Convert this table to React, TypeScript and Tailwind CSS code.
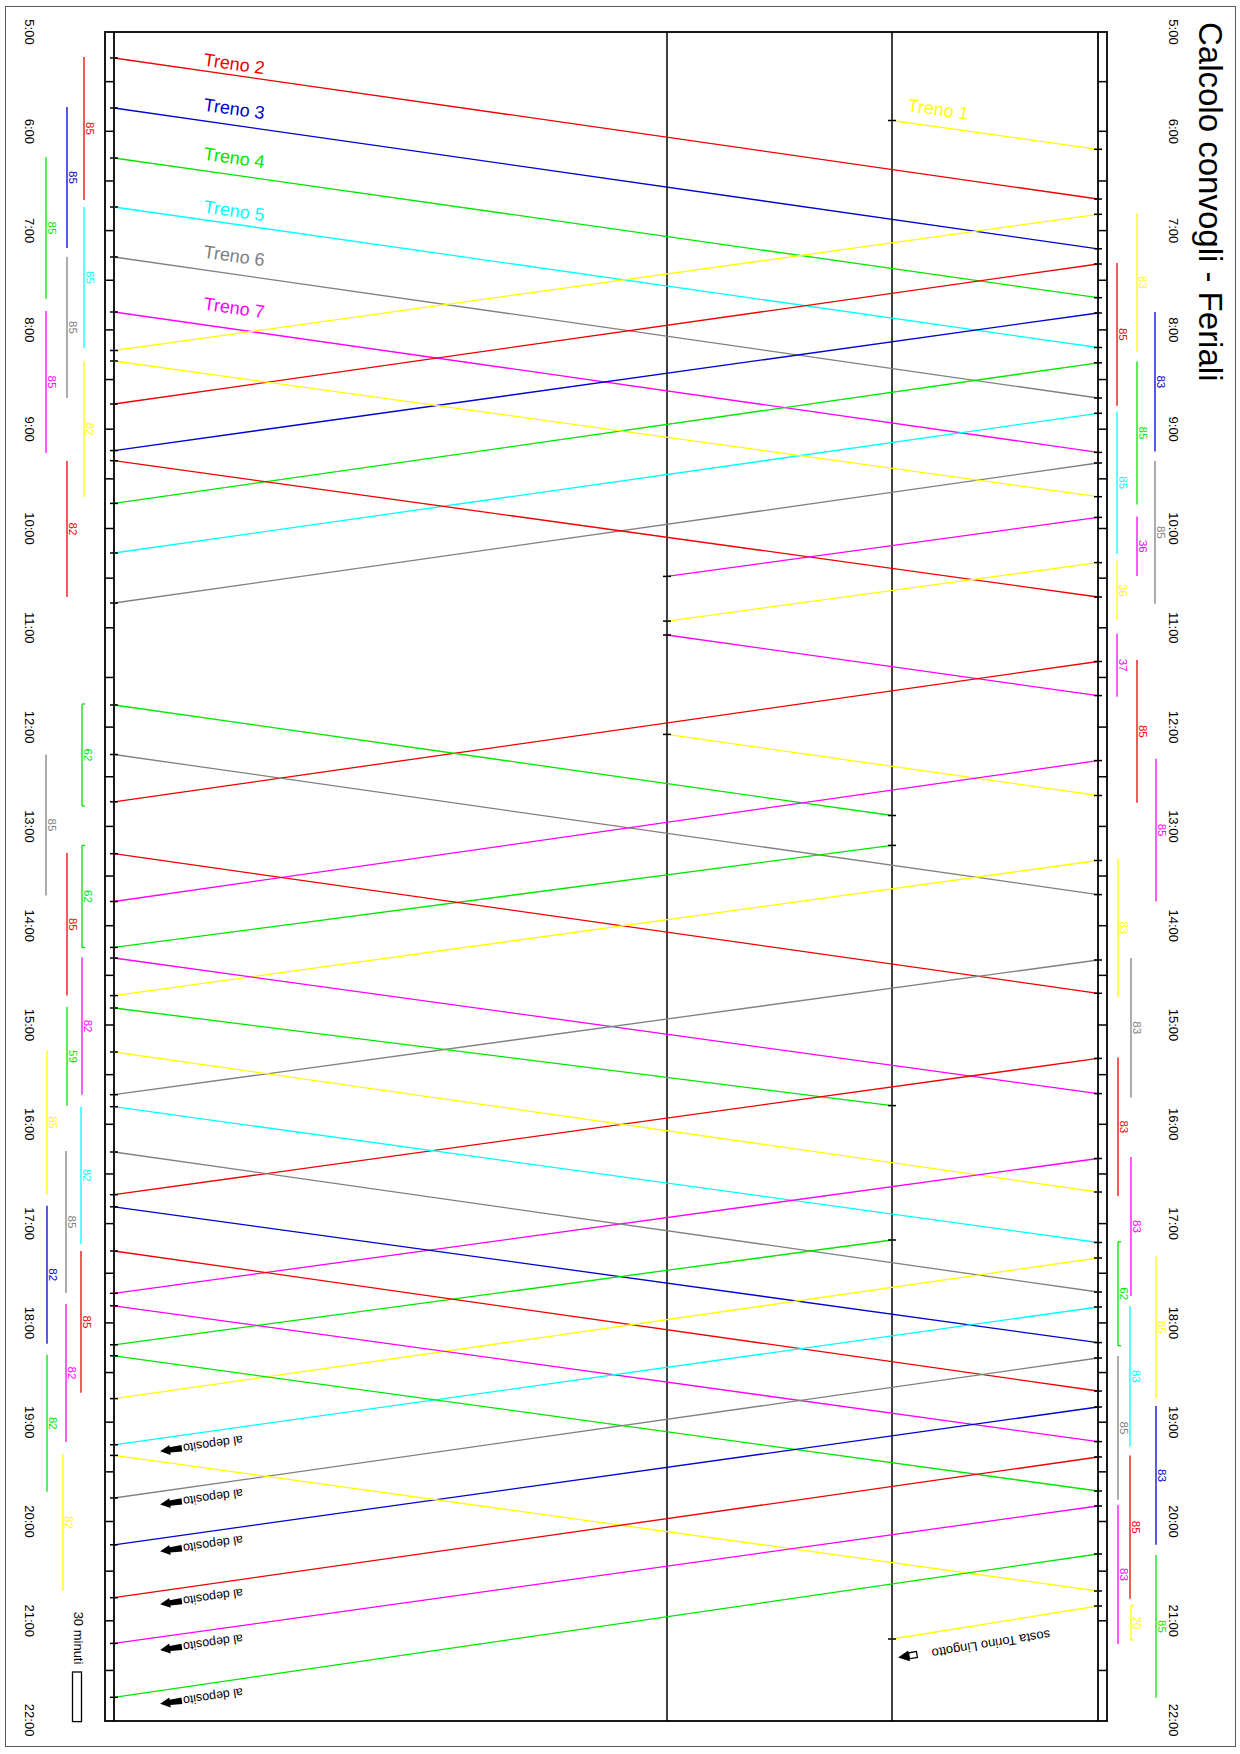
import React from 'react';

/**
 * Orario grafico - calcolo convogli (feriali)
 * Coordinate in px della pagina: y = tempo (5:00 -> 32, 22:00 -> 1720), x = stazione
 */

type Station = 'L' | 'R' | 'M1' | 'M2';
const X: Record<Station, number> = { L: 114, R: 1098, M1: 667, M2: 892 };

const C = {
  red: '#f00000',
  blue: '#0000d0',
  green: '#00e600',
  cyan: '#00ffff',
  gray: '#808080',
  magenta: '#ff00ff',
  yellow: '#ffff00',
};
type Col = keyof typeof C;

const TOP = 32;
const BOTTOM = 1721;
const HOUR = 99.3;

// [colore, partenza, y, arrivo, y]
const corse: [Col, Station, number, Station, number][] = [
  ['red', 'L', 58, 'R', 199],
  ['blue', 'L', 108, 'R', 248.8],
  ['green', 'L', 158, 'R', 297.7],
  ['cyan', 'L', 207, 'R', 347.5],
  ['gray', 'L', 257, 'R', 398],
  ['magenta', 'L', 312, 'R', 452.4],
  ['yellow', 'M2', 120.5, 'R', 149.3],
  ['yellow', 'R', 214.3, 'L', 350.5],
  ['red', 'R', 264, 'L', 404],
  ['blue', 'R', 313, 'L', 450.6],
  ['green', 'R', 362.8, 'L', 503.4],
  ['cyan', 'R', 413.3, 'L', 553],
  ['gray', 'R', 463, 'L', 603],
  ['yellow', 'L', 361, 'R', 496.7],
  ['red', 'L', 460.7, 'R', 597],
  ['magenta', 'R', 517.4, 'M1', 576.4],
  ['yellow', 'R', 562.6, 'M1', 621.1],
  ['magenta', 'M1', 635, 'R', 695.6],
  ['red', 'R', 661.5, 'L', 801.8],
  ['yellow', 'M1', 734.4, 'R', 795.5],
  ['green', 'L', 705, 'M2', 815.5],
  ['gray', 'L', 754.5, 'R', 894.6],
  ['magenta', 'R', 760.6, 'L', 901.5],
  ['green', 'M2', 845.4, 'L', 947.4],
  ['red', 'L', 853.7, 'R', 993.3],
  ['yellow', 'R', 860.5, 'L', 995.6],
  ['magenta', 'L', 958, 'R', 1093.6],
  ['gray', 'R', 960, 'L', 1094.7],
  ['green', 'L', 1008, 'M2', 1105.6],
  ['red', 'R', 1058.4, 'L', 1194.7],
  ['yellow', 'L', 1052, 'R', 1192],
  ['cyan', 'L', 1106.7, 'R', 1242.5],
  ['magenta', 'R', 1158.5, 'L', 1293.3],
  ['gray', 'L', 1152, 'R', 1292],
  ['blue', 'L', 1206.8, 'R', 1342.6],
  ['green', 'M2', 1240, 'L', 1344.8],
  ['red', 'L', 1251, 'R', 1391],
  ['yellow', 'R', 1258, 'L', 1398.6],
  ['magenta', 'L', 1305.8, 'R', 1441.6],
  ['cyan', 'R', 1307, 'L', 1444.8],
  ['green', 'L', 1355.8, 'R', 1491],
  ['gray', 'R', 1358, 'L', 1498],
  ['blue', 'R', 1407, 'L', 1544.8],
  ['yellow', 'L', 1455.4, 'R', 1591],
  ['red', 'R', 1457, 'L', 1597.7],
  ['magenta', 'R', 1506, 'L', 1643.4],
  ['green', 'R', 1554, 'L', 1697.3],
  ['yellow', 'R', 1606, 'M2', 1639],
];

// durata corsa: [colore, x, y inizio, y fine, minuti, staffe]
type Bar = [Col, number, number, number, string, boolean?];

const barreSx: Bar[] = [
  ['red', 84, 57, 200, '85'],
  ['blue', 67, 107, 248, '85'],
  ['green', 46, 157, 299, '85'],
  ['cyan', 84, 207, 348, '85'],
  ['gray', 67, 257, 398, '85'],
  ['magenta', 46, 311, 453, '85'],
  ['yellow', 84, 361, 497, '82'],
  ['red', 67, 461, 597, '82'],
  ['green', 82, 704, 806, '62', true],
  ['gray', 46, 754.5, 895.5, '85'],
  ['green', 82, 845.5, 947.4, '62', true],
  ['red', 67, 853, 995.6, '85'],
  ['magenta', 82, 957.5, 1094.7, '82'],
  ['green', 67, 1007, 1105.8, '59'],
  ['yellow', 47, 1050.5, 1194.7, '85'],
  ['cyan', 81, 1106.7, 1244, '82'],
  ['gray', 66, 1151, 1293, '85'],
  ['blue', 47, 1205.8, 1343.7, '82'],
  ['red', 81, 1251, 1392.8, '85'],
  ['magenta', 66, 1304, 1442, '82'],
  ['green', 47, 1354.8, 1491.8, '82'],
  ['yellow', 63, 1454, 1591, '82'],
];

const barreDx: Bar[] = [
  ['yellow', 1137, 213, 352, '83'],
  ['red', 1117, 263, 405.7, '85'],
  ['blue', 1155, 312, 451.6, '83'],
  ['green', 1137, 361.6, 504.4, '85'],
  ['cyan', 1117, 411.4, 554, '85'],
  ['gray', 1155, 461, 603.7, '85'],
  ['magenta', 1137, 516.6, 576, '36'],
  ['yellow', 1117, 560.6, 620, '36'],
  ['magenta', 1117, 633.6, 696.7, '37'],
  ['red', 1137, 660, 802.7, '85'],
  ['magenta', 1156, 758.7, 901.5, '85'],
  ['yellow', 1118, 858.6, 997, '83'],
  ['gray', 1131, 958, 1097.4, '83'],
  ['red', 1118, 1057.6, 1196, '83'],
  ['magenta', 1131, 1157, 1296, '83'],
  ['green', 1118, 1241.7, 1345.7, '62', true],
  ['yellow', 1156, 1256, 1398.5, '85'],
  ['cyan', 1130, 1306, 1446.6, '83'],
  ['gray', 1118, 1356, 1499.8, '85'],
  ['blue', 1156, 1406, 1544.8, '83'],
  ['red', 1130, 1455.5, 1598.8, '85'],
  ['magenta', 1118, 1505, 1644, '83'],
  ['yellow', 1131, 1605.7, 1640, '20', true],
  ['green', 1156, 1555, 1697.8, '85'],
];

const treni: [string, Col, number, number][] = [
  ['Treno 2', 'red', 203, 65.5],
  ['Treno 3', 'blue', 203, 110.5],
  ['Treno 4', 'green', 203, 159.5],
  ['Treno 5', 'cyan', 203, 212.5],
  ['Treno 6', 'gray', 203, 257.5],
  ['Treno 7', 'magenta', 203, 309.5],
  ['Treno 1', 'yellow', 907, 111],
];

const rientri = [1444.8, 1498, 1544.8, 1597.7, 1643.4, 1697.3];
const ore = Array.from({ length: 18 }, (_, i) => i + 5);
const mezzore = Array.from({ length: 33 }, (_, i) => TOP + (i + 1) * 49.65);

function tickX(s: Station): [number, number] {
  if (s === 'L') return [110, 118];
  if (s === 'R') return [1094, 1102];
  return [X[s] - 4, X[s] + 4];
}

const Barra: React.FC<{ bar: Bar }> = ({ bar }) => {
  const [c, x, y1, y2, label, caps] = bar;
  return (
    <g stroke={C[c]} strokeWidth={1.3}>
      <line x1={x} y1={y1} x2={x} y2={y2} />
      {caps && (
        <>
          <line x1={x} y1={y1} x2={x + 3} y2={y1} />
          <line x1={x} y1={y2} x2={x + 3} y2={y2} />
        </>
      )}
      <text
        transform={`translate(${x + 1.5} ${(y1 + y2) / 2}) rotate(90)`}
        textAnchor="middle"
        fontSize={11.5}
        fill={C[c]}
        stroke="none"
      >
        {label}
      </text>
    </g>
  );
};

export default function App() {
  return (
    <div className="w-[1240px] h-[1754px] bg-white pl-[5px] pt-[6px] font-['Liberation_Sans',Arial,sans-serif]">
      <div className="flex w-[1231px] h-[1741px] border border-[#5a5a5a]">
        <svg width={1180} height={1739} viewBox="6 7 1180 1739" className="shrink-0">
          {/* ore */}
          {ore.map((h) => {
            const y = TOP + (h - 5) * HOUR;
            return (
              <g key={h} fontSize={13} fill="#000">
                <text transform={`translate(29 ${y}) rotate(90)`} textAnchor="middle" dominantBaseline="central">
                  {h}:00
                </text>
                <text transform={`translate(1173 ${y}) rotate(90)`} textAnchor="middle" dominantBaseline="central">
                  {h}:00
                </text>
              </g>
            );
          })}

          {/* durate */}
          {barreSx.map((b, i) => (
            <Barra key={`s${i}`} bar={b} />
          ))}
          {barreDx.map((b, i) => (
            <Barra key={`d${i}`} bar={b} />
          ))}

          {/* scala 30 minuti */}
          <text transform="translate(78 1638) rotate(90)" textAnchor="middle" dominantBaseline="central" fontSize={13}>
            30 minuti
          </text>
          <rect x={72.5} y={1672} width={9} height={49.6} fill="none" stroke="#000" strokeWidth={1.3} />

          {/* telaio */}
          <g stroke="#000" strokeWidth={1.8} fill="none">
            <rect x={105} y={TOP} width={1002} height={BOTTOM - TOP} />
            <line x1={X.L} y1={TOP} x2={X.L} y2={BOTTOM} />
            <line x1={X.R} y1={TOP} x2={X.R} y2={BOTTOM} />
          </g>
          <g stroke="#000" strokeWidth={1.5}>
            <line x1={X.M1} y1={TOP} x2={X.M1} y2={BOTTOM} />
            <line x1={X.M2} y1={TOP} x2={X.M2} y2={BOTTOM} />
          </g>
          <g stroke="#000" strokeWidth={1.5}>
            {mezzore.map((y, i) => (
              <React.Fragment key={i}>
                <line x1={105} y1={y} x2={X.L} y2={y} />
                <line x1={X.R} y1={y} x2={1107} y2={y} />
              </React.Fragment>
            ))}
          </g>

          {/* corse */}
          {corse.map(([c, a, ya, b, yb], i) => (
            <line key={i} x1={X[a]} y1={ya} x2={X[b]} y2={yb} stroke={C[c]} strokeWidth={1.3} />
          ))}
          <g stroke="#000" strokeWidth={1.5}>
            {corse.map(([, a, ya, b, yb], i) => {
              const [a1, a2] = tickX(a);
              const [b1, b2] = tickX(b);
              return (
                <React.Fragment key={i}>
                  <line x1={a1} y1={ya} x2={a2} y2={ya} />
                  <line x1={b1} y1={yb} x2={b2} y2={yb} />
                </React.Fragment>
              );
            })}
          </g>

          {/* nomi treni */}
          {treni.map(([t, c, x, y]) => (
            <text key={t} x={x} y={y} transform={`rotate(8.15 ${x} ${y})`} fontSize={18} fill={C[c]}>
              {t}
            </text>
          ))}

          {/* al deposito */}
          {rientri.map((y) => (
            <g key={y}>
              <text
                transform={`translate(213 ${y - 1}) rotate(171.85)`}
                textAnchor="middle"
                dominantBaseline="central"
                fontSize={12.5}
                fill="#000"
              >
                al deposito
              </text>
              <polygon
                transform={`translate(171 ${y + 5}) rotate(171.85)`}
                points="11,0 1,-5 1,-2.6 -11,-3.2 -11,3.2 1,2.6 1,5"
                fill="#000"
              />
            </g>
          ))}

          {/* sosta */}
          <text
            transform="translate(991 1644) rotate(170.9)"
            textAnchor="middle"
            dominantBaseline="central"
            fontSize={13}
            fill="#000"
          >
            sosta Torino Lingotto
          </text>
          <g transform="translate(908 1656) rotate(170.9)">
            <polygon points="-1,-3 -9,-3 -9,3 -1,3" fill="#fff" stroke="#000" strokeWidth={1.3} />
            <polygon points="10,0 -1,-5.5 -1,5.5" fill="#000" />
          </g>
        </svg>

        <div className="flex-1 pl-[8px] pt-[15px]">
          <h1 className="[writing-mode:vertical-rl] text-[33px] leading-[33px] font-normal text-black">
            Calcolo convogli - Feriali
          </h1>
        </div>
      </div>
    </div>
  );
}
